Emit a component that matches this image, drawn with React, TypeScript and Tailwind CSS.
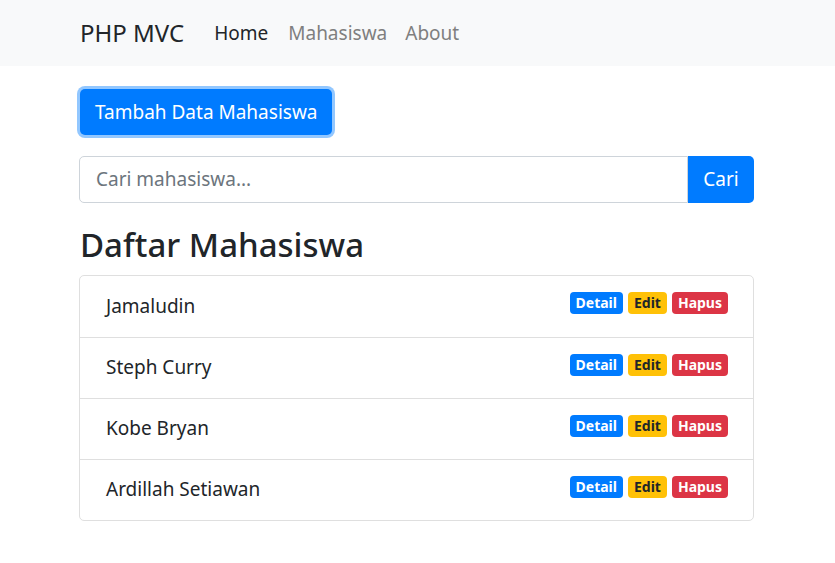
import React from 'react';

const mahasiswa = ['Jamaludin', 'Steph Curry', 'Kobe Bryan', 'Ardillah Setiawan'];

const App = () => {
  return (
    <div className="min-h-[563px] bg-white text-[#212529] text-[19px]" style={{ fontFamily: '"Noto Sans", "Open Sans", sans-serif' }}>
      {/* navbar */}
      <nav className="h-[66px] bg-[#f8f9fa]">
        <div className="w-[675px] ml-[80px] h-full flex items-center">
          <a className="text-[24px] mr-[30px] text-[#212529]">PHP MVC</a>
          <a className="mr-[20px] text-[#212529]">Home</a>
          <a className="mr-[18px] text-[#7f7f7f]">Mahasiswa</a>
          <a className="text-[#7f7f7f]">About</a>
        </div>
      </nav>

      <div className="w-[675px] ml-[79px]">
        <div className="mt-[23px] pl-[1px]">
          <button className="h-[46px] px-[15px] rounded-[5px] bg-[#007bff] text-white shadow-[0_0_0_3px_rgba(38,143,255,0.5)]">
            Tambah Data Mahasiswa
          </button>
        </div>

        <div className="mt-[21px] flex h-[47px]">
          <input
            type="text"
            placeholder="Cari mahasiswa..."
            className="flex-1 border border-[#ced4da] rounded-l-[5px] px-[16px] outline-none placeholder:text-[#6c757d]"
          />
          <button className="w-[66px] bg-[#007bff] text-white rounded-r-[5px]">Cari</button>
        </div>

        <h3 className="mt-[22px] mb-[10px] pl-[1px] text-[33px] font-medium leading-[1.2]">Daftar Mahasiswa</h3>

        <ul className="border border-[#dfdfdf] rounded-[5px]">
          {mahasiswa.map((nama, i) => (
            <li
              key={nama}
              className={`flex items-center justify-between h-[61px] pl-[26px] pr-[25px] ${i > 0 ? 'border-t border-[#dfdfdf]' : ''}`}
            >
              <span>{nama}</span>
              <span className="flex gap-[5px] text-[14px] font-bold leading-none -mt-[6px]">
                <a className="px-[6px] h-[22px] flex items-center rounded-[4px] bg-[#007bff] text-white">Detail</a>
                <a className="px-[6px] h-[22px] flex items-center rounded-[4px] bg-[#ffc107] text-[#212529]">Edit</a>
                <a className="px-[6px] h-[22px] flex items-center rounded-[4px] bg-[#dc3545] text-white">Hapus</a>
              </span>
            </li>
          ))}
        </ul>
      </div>
    </div>
  );
};

export default App;
